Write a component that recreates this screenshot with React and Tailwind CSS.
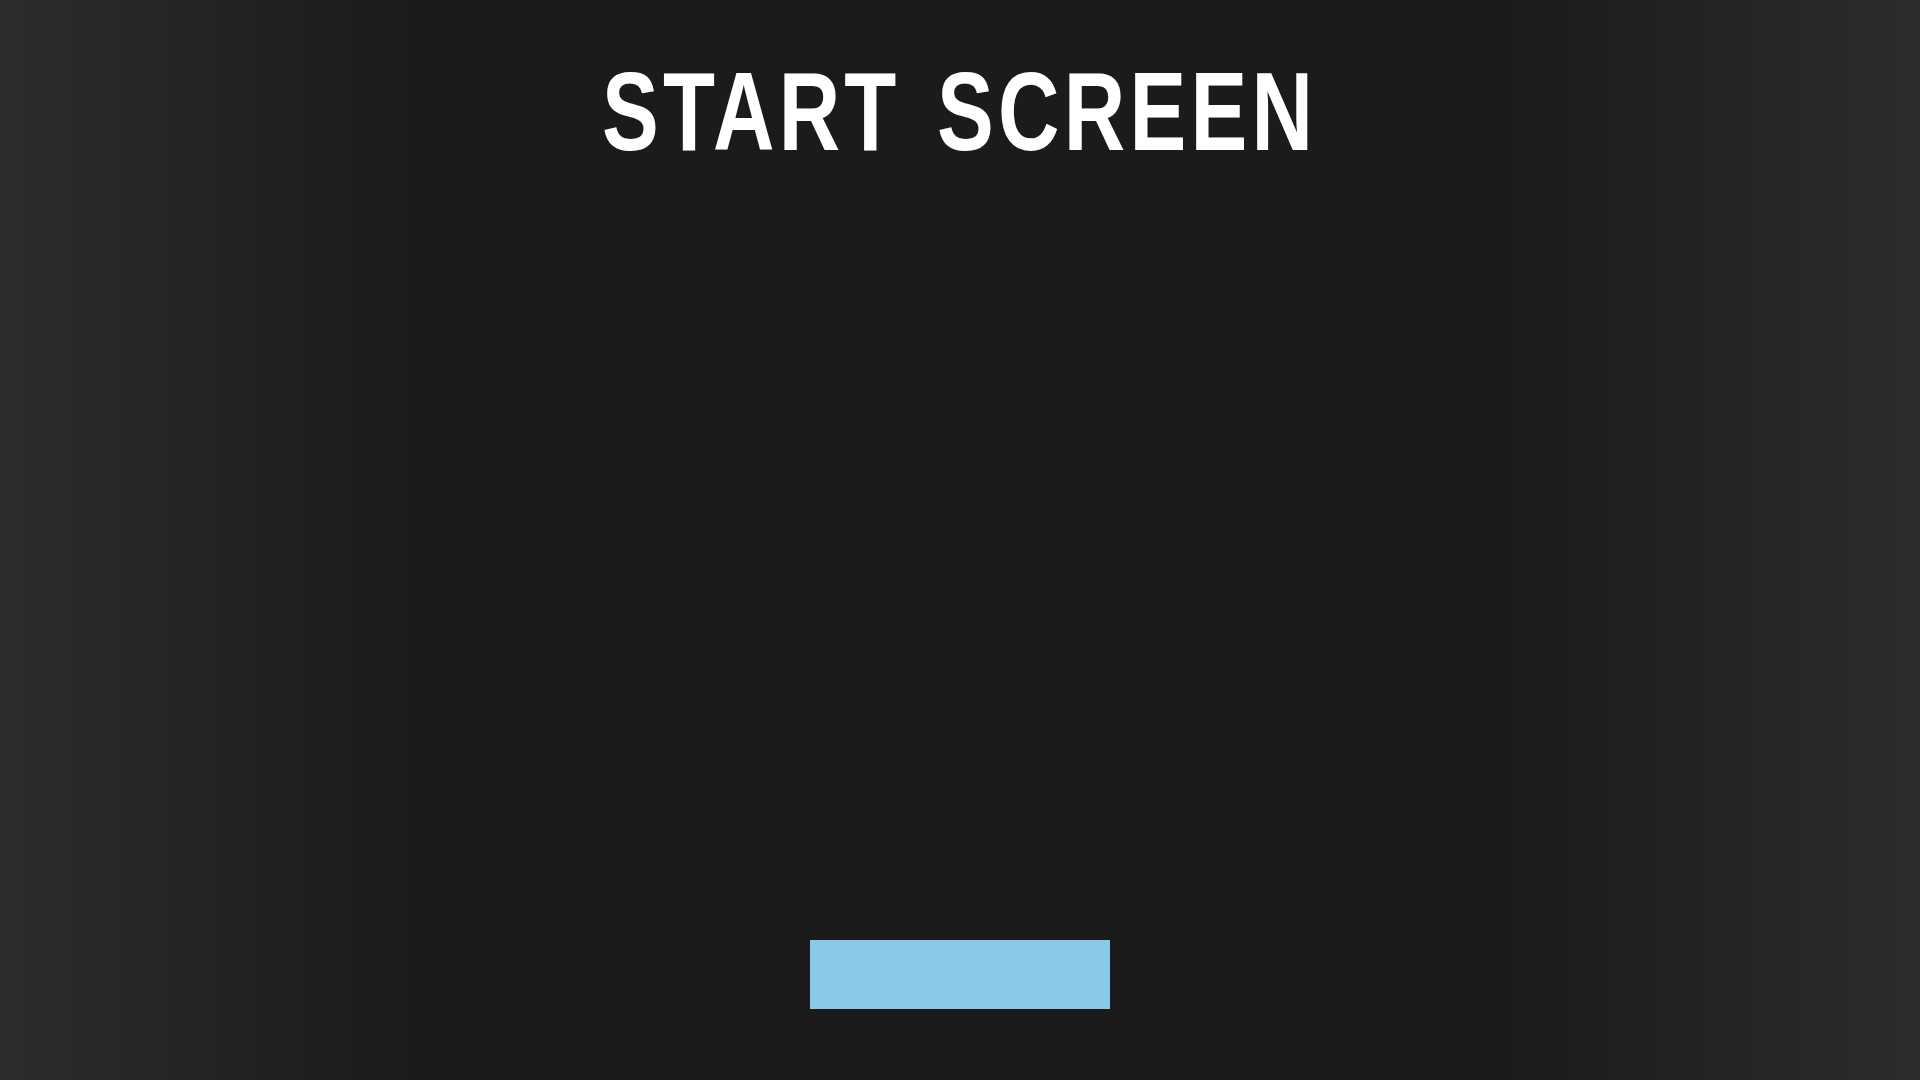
export default function App() {
  return (
    <div className="h-screen w-full flex flex-col items-center justify-between bg-[linear-gradient(to_right,#2c2c2c,#1b1b1b_21%,#1b1b1b_79%,#2c2c2c)]">
      <h1 className="pt-[56px] text-white font-bold text-[112px] leading-none tracking-[0.05em] [word-spacing:0.1em] scale-x-[0.76] origin-center whitespace-nowrap font-['Liberation_Sans',Arial,sans-serif]">
        START SCREEN
      </h1>
      <button className="mb-[71px] w-[300px] h-[69px] bg-[#89cae8]" aria-label="Start"></button>
    </div>
  );
}
